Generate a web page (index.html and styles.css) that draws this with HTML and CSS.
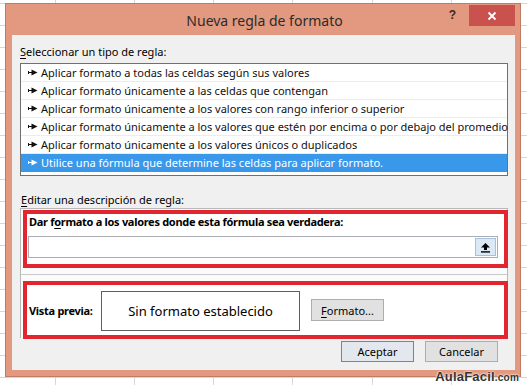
FILE: index.html
```html
<!DOCTYPE html>
<html lang="es">
<head>
<meta charset="utf-8">
<title>Nueva regla de formato</title>
<link rel="stylesheet" href="styles.css">
</head>
<body>
<div class="dialog">
  <div class="titlebar">
    <div></div>
    <div class="title">Nueva regla de formato</div>
    <div class="controls">
      <span class="help">?</span>
      <span class="close"><svg width="10" height="10" viewBox="0 0 10 10"><path d="M1.5 1.5 L8.5 8.5 M8.5 1.5 L1.5 8.5" stroke="#fff" stroke-width="1.8" fill="none"/></svg></span>
    </div>
  </div>
  <div class="client">
    <div class="label lbl-type"><u>S</u>eleccionar un tipo de regla:</div>
    <ul class="listbox">
      <li><svg class="arr" width="10" height="7" viewBox="0 0 10 7"><path d="M0.5 2 V5 M0.5 3.5 H4" stroke="currentColor" stroke-width="1" fill="none"/><path d="M3.5 0.5 L9.5 3.5 L3.5 6.5 Z" fill="currentColor"/></svg>Aplicar formato a todas las celdas según sus valores</li>
      <li><svg class="arr" width="10" height="7" viewBox="0 0 10 7"><path d="M0.5 2 V5 M0.5 3.5 H4" stroke="currentColor" stroke-width="1" fill="none"/><path d="M3.5 0.5 L9.5 3.5 L3.5 6.5 Z" fill="currentColor"/></svg>Aplicar formato únicamente a las celdas que contengan</li>
      <li><svg class="arr" width="10" height="7" viewBox="0 0 10 7"><path d="M0.5 2 V5 M0.5 3.5 H4" stroke="currentColor" stroke-width="1" fill="none"/><path d="M3.5 0.5 L9.5 3.5 L3.5 6.5 Z" fill="currentColor"/></svg>Aplicar formato únicamente a los valores con rango inferior o superior</li>
      <li><svg class="arr" width="10" height="7" viewBox="0 0 10 7"><path d="M0.5 2 V5 M0.5 3.5 H4" stroke="currentColor" stroke-width="1" fill="none"/><path d="M3.5 0.5 L9.5 3.5 L3.5 6.5 Z" fill="currentColor"/></svg>Aplicar formato únicamente a los valores que estén por encima o por debajo del promedio</li>
      <li><svg class="arr" width="10" height="7" viewBox="0 0 10 7"><path d="M0.5 2 V5 M0.5 3.5 H4" stroke="currentColor" stroke-width="1" fill="none"/><path d="M3.5 0.5 L9.5 3.5 L3.5 6.5 Z" fill="currentColor"/></svg>Aplicar formato únicamente a los valores únicos o duplicados</li>
      <li class="sel"><svg class="arr" width="10" height="7" viewBox="0 0 10 7"><path d="M0.5 2 V5 M0.5 3.5 H4" stroke="currentColor" stroke-width="1" fill="none"/><path d="M3.5 0.5 L9.5 3.5 L3.5 6.5 Z" fill="currentColor"/></svg>Utilice una fórmula que determine las celdas para aplicar formato.</li>
    </ul>
    <div class="label lbl-edit"><u>E</u>ditar una descripción de regla:</div>
    <div class="panel">
      <div class="redbox rb1">
        <div class="bold cond">Dar f<u>o</u>rmato a los valores donde esta fórmula sea verdadera:</div>
        <div class="input">
          <span class="refbtn"><svg width="11" height="11" viewBox="0 0 11 11"><path d="M5.5 1 L10 5.5 H7 V8 H4 V5.5 H1 Z" fill="#000"/><rect x="1" y="9.2" width="9" height="1.4" fill="#000"/></svg></span>
        </div>
      </div>
      <div class="sep"></div>
      <div class="redbox rb2">
        <span class="bold vp">Vista previa:</span>
        <div class="preview">Sin formato establecido</div>
        <button class="btn fmt"><u>F</u>ormato...</button>
      </div>
    </div>
    <div class="actions">
      <button class="btn default">Aceptar</button>
      <button class="btn">Cancelar</button>
    </div>
  </div>
</div>
<div class="watermark">AulaFacil<span class="dom">.com</span></div>
</body>
</html>
```
FILE: styles.css
```css
html, body {
  margin: 0;
  padding: 0;
}
body {
  width: 527px;
  height: 385px;
  overflow: hidden;
  position: relative;
  font-family: "Noto Sans", "Open Sans", sans-serif;
  font-size: 11px;
  color: #000;
  background-color: #fff;
  background-image:
    repeating-linear-gradient(to bottom, transparent 0, transparent 3px, #d6d6d6 3px, #d6d6d6 4px, transparent 4px, transparent 22px),
    repeating-linear-gradient(to right, transparent 0, transparent 54.5px, #d6d6d6 54.5px, #d6d6d6 55.5px, transparent 55.5px, transparent 79.3px);
}
.dialog {
  box-sizing: border-box;
  margin: 3px 0 0 5px;
  width: 516px;
  height: 374px;
  border: 1px solid #bf7b63;
  background: #e3997f;
  padding: 0 5px 6px 6px;
  display: flex;
  flex-direction: column;
}
.titlebar {
  height: 31px;
  display: grid;
  grid-template-columns: 1fr auto 1fr;
  align-items: start;
}
.title {
  font-size: 14px;
  color: #2b2b2b;
  line-height: 20px;
  margin-top: 7px;
  margin-left: 2px;
}
.controls {
  display: flex;
  justify-content: flex-end;
  align-items: flex-start;
  margin-top: 1px;
}
.help {
  font-family: "Liberation Sans", sans-serif;
  font-weight: bold;
  font-size: 12px;
  color: #3a2a24;
  margin: 3px 13px 0 0;
}
.close {
  width: 46px;
  height: 21px;
  background: #c9524f;
  display: flex;
  align-items: center;
  justify-content: center;
}
.client {
  flex: 1;
  background: #f0f0f0;
  padding: 9px 7px 0 8px;
  display: flex;
  flex-direction: column;
}
.label {
  line-height: 16px;
  height: 16px;
}
.label u, .cond u, .fmt u {
  text-decoration-thickness: 1px;
  text-underline-offset: 2px;
}
.listbox {
  list-style: none;
  margin: 3px 0 0 0;
  padding: 0 0 3px 0;
  border: 1px solid #707070;
  background: #fff;
  box-sizing: content-box;
  height: 108px;
}
.listbox li {
  box-sizing: border-box;
  height: 18px;
  line-height: 17px;
  border-bottom: 1px solid #ececec;
  padding-left: 7px;
  display: flex;
  align-items: center;
  white-space: nowrap;
  color: #111;
}
.listbox li.sel {
  background: #3a98eb;
  color: #fff;
  border-bottom-color: #3a98eb;
}
.arr {
  margin-right: 3px;
  flex: none;
}
.lbl-edit {
  margin-top: 16px;
  padding-left: 1px;
}
.panel {
  border: 1px solid #b9b9b9;
  border-bottom: none;
  background: #fbfbfb;
  padding: 1px 0 0 2px;
  height: 128px;
}
.redbox {
  border: 4px solid #e1262f;
  background: #fff;
  box-sizing: border-box;
  height: 58px;
  width: 485px;
}
.bold {
  font-weight: bold;
  letter-spacing: -0.3px;
}
.rb1 {
  padding: 0 6px 0 1px;
}
.cond {
  line-height: 16px;
  padding-left: 1px;
  white-space: nowrap;
}
.input {
  margin-top: 6px;
  height: 22px;
  box-sizing: border-box;
  border: 1px solid #abadb3;
  background: #fff;
  display: flex;
  justify-content: flex-end;
  align-items: center;
  padding-right: 1px;
}
.refbtn {
  width: 21px;
  height: 18px;
  box-sizing: border-box;
  background: #dbe8f6;
  border: 1px solid #a8c0dc;
  display: flex;
  align-items: center;
  justify-content: center;
}
.sep {
  height: 1px;
  background: #c9c9c9;
  margin: 6px 0 6px -2px;
}
.rb2 {
  display: flex;
  align-items: center;
  padding-left: 2px;
}
.vp {
  width: 72px;
}
.preview {
  width: 199px;
  height: 40px;
  box-sizing: border-box;
  border: 1px solid #5f5f5f;
  background: #fff;
  display: flex;
  align-items: center;
  justify-content: center;
  font-size: 13px;
  margin-top: 2px;
}
.btn {
  font-family: inherit;
  font-size: 11px;
  color: #000;
  width: 73px;
  height: 21px;
  box-sizing: border-box;
  border: 1px solid #adadad;
  background: #e1e1e1;
  padding: 0;
  margin: 0;
  line-height: 19px;
}
.fmt {
  margin-left: 11px;
  height: 22px;
}
.btn.default {
  border-color: #4a90d0;
  background: #e3e8ee;
}
.actions {
  display: flex;
  justify-content: flex-end;
  gap: 11px;
  margin-top: 3px;
  padding-right: 10px;
}
.watermark {
  position: absolute;
  right: 8px;
  bottom: 1px;
  font-family: "Liberation Sans", sans-serif;
  font-weight: bold;
  font-size: 13px;
  color: #333;
  letter-spacing: 0.2px;
  text-shadow: 0 0 2px #fff, 0 0 2px #fff;
}
.watermark .dom {
  font-size: 10px;
}
```
